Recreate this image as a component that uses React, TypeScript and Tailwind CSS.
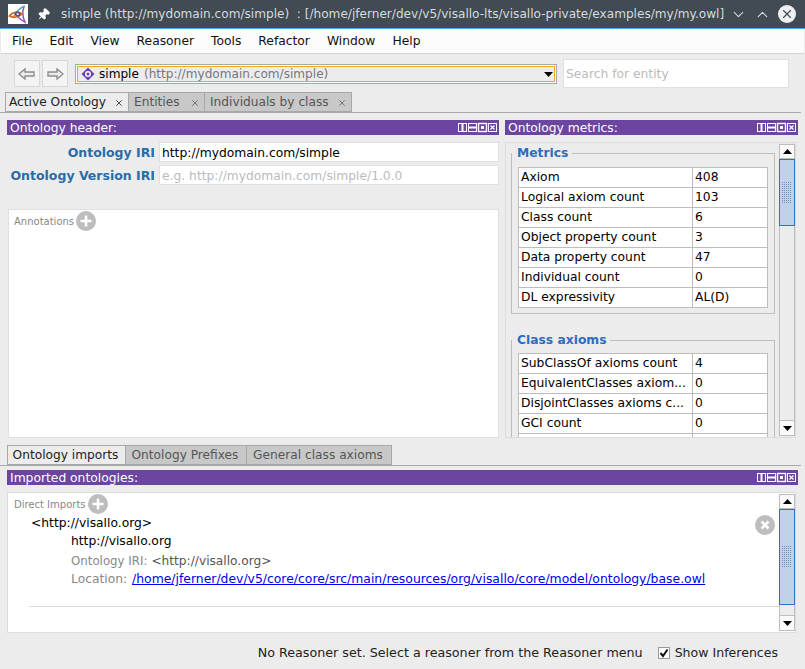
import React from "react";
import { ChevronDown, ChevronUp, Pin, X } from "lucide-react";

const menus = ["File", "Edit", "View", "Reasoner", "Tools", "Refactor", "Window", "Help"];

const metrics = [
  ["Axiom", "408"],
  ["Logical axiom count", "103"],
  ["Class count", "6"],
  ["Object property count", "3"],
  ["Data property count", "47"],
  ["Individual count", "0"],
  ["DL expressivity", "AL(D)"],
];

const classAxioms = [
  ["SubClassOf axioms count", "4"],
  ["EquivalentClasses axiom...", "0"],
  ["DisjointClasses axioms c...", "0"],
  ["GCI count", "0"],
  ["", ""],
];

const Logo = () => (
  <svg width="20" height="20" viewBox="0 0 20 20" className="bg-white shrink-0">
    <path d="M17 2C13 3 9 7 6 12" fill="none" stroke="#5aa6c8" strokeWidth="1.500" />
    <path d="M16 3C14 8 15 14 17 18C13 16 9 13 7 9" fill="none" stroke="#9a4fc0" strokeWidth="1.500" />
    <path d="M1.500 12C4 8 10 7 14 10C10 13 5 14 1.500 12Z" fill="none" stroke="#d0691e" strokeWidth="1.800" />
    <circle cx="9.500" cy="10" r="2" fill="none" stroke="#3c4c8c" strokeWidth="1.200" />
  </svg>
);

const ViewIcons = () => (
  <svg width="39" height="11" viewBox="0 0 39 11" className="shrink-0">
    <g fill="none" stroke="#fff" strokeWidth="1">
      <rect x="0.500" y="1.500" width="8" height="8" />
      <path d="M4.500 1.500V9.500" strokeWidth="2" />
      <rect x="10.500" y="1.500" width="8" height="8" />
      <path d="M10.500 5.500H18.500" strokeWidth="2" />
      <rect x="20.500" y="1.500" width="8" height="8" strokeWidth="1.400" />
      <rect x="23" y="4" width="3" height="3" fill="#fff" stroke="none" />
      <rect x="30.500" y="1.500" width="8" height="8" />
      <path d="M32.500 3.500L36.500 7.500M36.500 3.500L32.500 7.500" strokeWidth="1.200" />
    </g>
  </svg>
);

const ViewHeader = ({ title }: { title: string }) => (
  <div className="h-[15px] w-full bg-[#6b45a0] flex items-center justify-between pl-[3px] pr-[2px] text-white leading-none">
    <span className="pt-px">{title}</span>
    <ViewIcons />
  </div>
);

const Arrow = ({ down }: { down?: boolean }) => (
  <svg width="9" height="5" viewBox="0 0 9 5">
    <path d={down ? "M0 0H9L4.500 5Z" : "M0 5H9L4.500 0Z"} fill="#000" />
  </svg>
);

const Scrollbar = ({ thumb, track }: { thumb: number; track: number }) => (
  <div className="w-[16px] flex flex-col shrink-0 border-x border-[#bdbdbd] bg-[#ececec]">
    <div className="h-[15px] bg-[#fafafa] border-y border-[#bdbdbd] flex items-center justify-center">
      <Arrow />
    </div>
    <div className="bg-[#c0d2e8] border border-[#2f6fd0] -mx-px flex items-center justify-center" style={{ height: thumb }}>
      <svg width="10" height="22" viewBox="0 0 10 22">
        <defs>
          <pattern id="dots" width="2" height="2" patternUnits="userSpaceOnUse">
            <rect width="1" height="1" fill="#6f8fc0" />
          </pattern>
        </defs>
        <rect width="10" height="22" fill="url(#dots)" />
      </svg>
    </div>
    <div style={{ height: track }} />
    <div className="h-[16px] bg-[#fafafa] border-y border-[#bdbdbd] flex items-center justify-center">
      <Arrow down />
    </div>
  </div>
);

const MetricTable = ({ rows }: { rows: string[][] }) => (
  <div className="w-[250px] border-l border-t border-[#bdbdbd] bg-white text-black">
    {rows.map(([name, value], i) => (
      <div key={i} className="grid grid-cols-[174px_75px] h-[20px] leading-[19px]">
        <div className="border-r border-b border-[#bdbdbd] pl-[2px] overflow-hidden whitespace-nowrap">{name}</div>
        <div className="border-r border-b border-[#bdbdbd] pl-[2px]">{value}</div>
      </div>
    ))}
  </div>
);

const Group = ({ title, children, className }: { title: string; children: React.ReactNode; className: string }) => (
  <div className={`relative border border-[#bdbdbd] w-[264px] px-[6px] ${className}`}>
    <span className="absolute left-0 -top-[8px] bg-[#ececec] pl-[5px] pr-[4px] leading-[15px] font-bold text-[#2f6cc0]">{title}</span>
    {children}
  </div>
);

const Tab = ({ label, active, close, w }: { label: string; active?: boolean; close?: boolean; w: string }) => (
  <div
    className={`${w} h-[20px] flex items-center pt-px border border-[#a8a8a8] -ml-px first:ml-0 text-[12.2px] ${
      close ? "justify-between pr-[4px]" : "justify-center pr-[5px]"
    } ${active ? "bg-[#ececec] text-[#222] pl-[3px]" : `bg-[#c8c8c8] text-[#555] ${close ? "pl-[5px]" : "pl-[3px]"}`}`}
  >
    <span className="whitespace-nowrap">{label}</span>
    {close && <X size={10} strokeWidth={2} className={active ? "text-[#333]" : "text-[#666]"} />}
  </div>
);

const PlusBadge = () => (
  <svg width="20" height="20" viewBox="0 0 20 20" className="shrink-0">
    <circle cx="10" cy="10" r="10" fill="#bdbdbd" />
    <path d="M10 4.500V15.500M4.500 10H15.500" stroke="#fff" strokeWidth="2.600" />
  </svg>
);

export default function App() {
  return (
    <div className="w-[805px] h-[669px] bg-[#ececec] flex flex-col overflow-hidden text-[12.3px] font-['DejaVu_Sans',sans-serif] text-[#222]">
      {/* window title bar */}
      <div className="h-[29px] shrink-0 bg-[#414b54] border-b border-[#3daee9] flex items-center pl-[8px] text-[#d8dadc]">
        <Logo />
        <Pin size={13} fill="#fff" strokeWidth={2} className="text-white rotate-45 ml-[9px] shrink-0" />
        <span className="ml-[11px] w-[669px] shrink-0 whitespace-pre text-[12.1px]">simple (http://mydomain.com/simple)  : [/home/jferner/dev/v5/visallo-lts/visallo-private/examples/my/my.owl]</span>
        <ChevronDown size={17} strokeWidth={1.500} className="shrink-0" />
        <ChevronUp size={17} strokeWidth={1.500} className="ml-[7px] shrink-0" />
        <div className="ml-[7px] w-[18px] h-[18px] rounded-full bg-[#eff0f1] flex items-center justify-center shrink-0">
          <X size={14} strokeWidth={2} className="text-[#414b54]" />
        </div>
      </div>

      {/* menu bar */}
      <div className="h-[25px] shrink-0 bg-[#fcfcfc] border-b border-[#d4d4d4] mx-[1px] flex items-center gap-[17px] pl-[11px] text-[#111]">
        {menus.map((m) => (
          <span key={m}>{m}</span>
        ))}
      </div>

      {/* toolbar */}
      <div className="h-[38px] shrink-0 flex items-start pt-[5px] pl-[14px]">
        <div className="flex gap-[2px] mt-px">
          {["M2 8L8 3V6H17V10H8V13Z", "M18 8L12 3V6H3V10H12V13Z"].map((d) => (
            <div key={d} className="w-[26px] h-[27px] bg-[#f4f4f4] border border-[#d8d8d8] flex items-center justify-center">
              <svg width="20" height="16" viewBox="0 0 20 16">
                <path d={d} fill="#ececec" stroke="#8c8c8c" strokeWidth="1.300" />
              </svg>
            </div>
          ))}
        </div>
        <div className="ml-[7px] mt-[5px] w-[482px] h-[20px] border border-[#a8a8a8] p-px bg-white">
          <div className="h-full border border-[#f0a81e] bg-[#ececec] flex items-center pl-[3px] pr-[1px] leading-none text-[12.1px]">
            <svg width="14" height="14" viewBox="0 0 14 14" className="shrink-0">
              <path d="M7 .5L13.500 7L7 13.500L.5 7Z" fill="#6b3fb0" />
              <circle cx="7" cy="7" r="3" fill="#fff" />
              <circle cx="7" cy="7" r="1.500" fill="#6b3fb0" />
            </svg>
            <span className="ml-[4px] text-black">simple</span>
            <span className="ml-[5px] text-[#777]">(http://mydomain.com/simple)</span>
            <span className="ml-auto">
              <Arrow down />
            </span>
          </div>
        </div>
        <div className="ml-[6px] w-[226px] h-[29px] bg-white border border-[#e0e0e0] flex items-center pl-[2px] pt-px text-[#bbb]">
          Search for entity
        </div>
      </div>

      {/* main tabs */}
      <div className="h-[20px] shrink-0 flex pl-[5px] mr-[4px] border-b border-[#a8a8a8] box-content">
        <Tab label="Active Ontology" active close w="w-[124px]" />
        <Tab label="Entities" close w="w-[77px]" />
        <Tab label="Individuals by class" close w="w-[148px]" />
      </div>

      {/* top views */}
      <div className="h-[332px] shrink-0 flex pt-[7px] pl-[7px]">
        <div className="w-[492px] shrink-0 flex flex-col">
          <ViewHeader title="Ontology header:" />
          <div className="flex items-center h-[20px] mt-[7px]">
            <label className="w-[148px] pt-[2px] text-right font-bold text-[12.5px] text-[#2a6ca8]">Ontology IRI</label>
            <div className="ml-[4px] w-[340px] h-[20px] bg-white border border-[#e0e0e0] pl-[2px] pt-px leading-[19px] text-black">http://mydomain.com/simple</div>
          </div>
          <div className="flex items-center h-[20px] mt-[3px]">
            <label className="w-[148px] pt-[2px] text-right font-bold text-[12.5px] text-[#2a6ca8] whitespace-nowrap">Ontology Version IRI</label>
            <div className="ml-[4px] w-[340px] h-[20px] bg-white border border-[#e0e0e0] pl-[2px] pt-px leading-[19px] text-[#bbb]">e.g. http://mydomain.com/simple/1.0.0</div>
          </div>
          <div className="mt-[24px] ml-[1px] w-[491px] h-[229px] bg-white border border-[#e0e0e0] flex items-start pt-px pl-[5px]">
            <span className="text-[10px] text-[#888] leading-[21px] mr-[2px]">Annotations</span>
            <PlusBadge />
          </div>
        </div>
        <div className="ml-[6px] w-[293px] shrink-0 flex flex-col">
          <ViewHeader title="Ontology metrics:" />
          <div className="mt-[7px] h-[296px] w-[291px] border border-[#dcdcdc] flex justify-between overflow-hidden pt-[1px]">
            <div className="pl-[5px] pt-[9px] overflow-hidden">
              <Group title="Metrics" className="h-[161px] pt-[13px]">
                <MetricTable rows={metrics} />
              </Group>
              <Group title="Class axioms" className="mt-[26px] h-[200px] pt-[12px]">
                <MetricTable rows={classAxioms} />
              </Group>
            </div>
            <div className="flex flex-col h-[292px]">
              <Scrollbar thumb={67} track={194} />
            </div>
          </div>
        </div>
      </div>

      {/* lower tabs */}
      <div className="h-[20px] shrink-0 flex pl-[7px] mr-[4px] border-b border-[#a8a8a8] box-content">
        <Tab label="Ontology imports" active w="w-[119px]" />
        <Tab label="Ontology Prefixes" w="w-[122px]" />
        <Tab label="General class axioms" w="w-[146px]" />
      </div>

      {/* imports view */}
      <div className="pl-[7px] pt-[4px] w-[798px] shrink-0">
        <ViewHeader title="Imported ontologies:" />
        <div className="mt-[7px] w-[789px] h-[141px] bg-white border border-[#dcdcdc] flex justify-between">
          <div className="flex-1 relative pl-[6px] pt-[1px]">
            <div className="flex items-center h-[20px]">
              <span className="text-[10px] text-[#888] mr-[2px] pt-px">Direct Imports</span>
              <PlusBadge />
            </div>
            <div className="ml-[17px] leading-[17px] pt-px text-black">&lt;http://visallo.org&gt;</div>
            <div className="ml-[57px] leading-[17px] pt-px text-black">http://visallo.org</div>
            <div className="ml-[57px] mt-[3px] leading-[17px] text-[#888]">
              <span className="text-[11.8px]">Ontology IRI:</span> <span className="text-[#555] text-[12.2px]">&lt;http://visallo.org&gt;</span>
            </div>
            <div className="ml-[57px] leading-[17px] text-[#888] whitespace-nowrap">
              Location: <a className="ml-[1px] text-[#0000ee] underline text-[12.4px]">/home/jferner/dev/v5/core/core/src/main/resources/org/visallo/core/model/ontology/base.owl</a>
            </div>
            <div className="ml-[15px] mt-[18px] border-t border-[#dcdcdc]" />
            <svg width="20" height="20" viewBox="0 0 20 20" className="absolute right-[4px] top-[22px]">
              <circle cx="10" cy="10" r="10" fill="#bdbdbd" />
              <path d="M6.500 6.500L13.500 13.500M13.500 6.500L6.500 13.500" stroke="#fff" strokeWidth="2.600" />
            </svg>
          </div>
          <div className="py-[1px]">
            <Scrollbar thumb={96} track={10} />
          </div>
        </div>
      </div>

      {/* status bar */}
      <div className="flex-1 flex items-center justify-end pr-[27px] pt-[4px] text-[#222]">
        <span className="text-[12.7px]">No Reasoner set. Select a reasoner from the Reasoner menu</span>
        <span className="ml-[15px] w-[12px] h-[12px] bg-white border border-[#9a9a9a] flex items-center justify-center">
          <svg width="10" height="10" viewBox="0 0 10 10">
            <path d="M1.500 5L4 8L8.500 1.500" fill="none" stroke="#111" strokeWidth="2" />
          </svg>
        </span>
        <span className="ml-[5px] text-[12.55px]">Show Inferences</span>
      </div>
    </div>
  );
}
